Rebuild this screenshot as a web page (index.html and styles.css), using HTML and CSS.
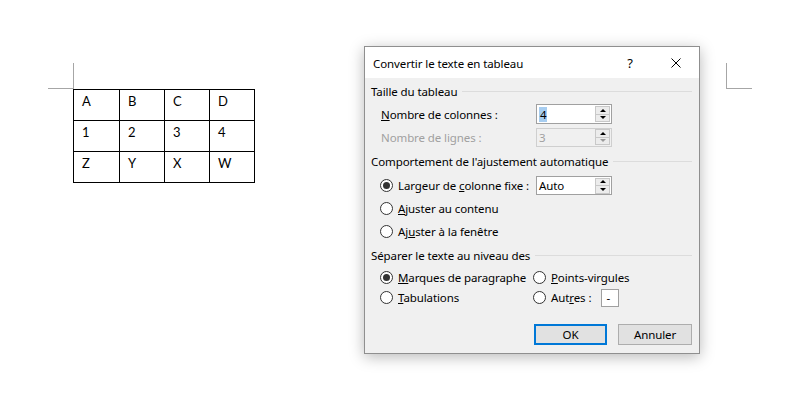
FILE: index.html
```html
<!DOCTYPE html>
<html lang="fr">
<head>
<meta charset="utf-8">
<title>Convertir le texte en tableau</title>
<link rel="stylesheet" href="styles.css">
</head>
<body>
<div class="doc">
  <div class="marks">
    <div class="mark mark-l"></div>
    <div class="mark mark-r"></div>
  </div>
  <table class="grid">
    <colgroup><col class="c1"><col class="c2"><col class="c2"><col class="c2"></colgroup>
    <tr><td>A</td><td>B</td><td>C</td><td>D</td></tr>
    <tr><td>1</td><td>2</td><td>3</td><td>4</td></tr>
    <tr><td>Z</td><td>Y</td><td>X</td><td>W</td></tr>
  </table>
</div>

<div class="dialog">
  <div class="titlebar">
    <span class="title">Convertir le texte en tableau</span>
    <span class="tb-btn help">?</span>
    <span class="tb-btn close">
      <svg width="10" height="10" viewBox="0 0 10 10"><path d="M0.5 0.5 L9.5 9.5 M9.5 0.5 L0.5 9.5" stroke="#000" stroke-width="1" fill="none"/></svg>
    </span>
  </div>
  <div class="body">
    <div class="section h1"><span>Taille du tableau</span><i class="rule"></i></div>
    <div class="row r-col">
      <span class="label"><u>N</u>ombre de colonnes :</span>
      <span class="spin"><span class="val"><span class="sel">4</span></span><span class="arrows"><b class="up"></b><b class="down"></b></span></span>
    </div>
    <div class="row r-lig disabled">
      <span class="label">Nombre de lignes :</span>
      <span class="spin off"><span class="val">3</span><span class="arrows"><b class="up"></b><b class="down"></b></span></span>
    </div>

    <div class="section h2"><span>Comportement de l'ajustement automatique</span><i class="rule"></i></div>
    <div class="row radio-row">
      <span class="opt w156"><span class="radio on"><span class="dot"></span></span><span class="txt">Largeur de <u>c</u>olonne fixe :</span></span>
      <span class="spin auto"><span class="val">Auto</span><span class="arrows"><b class="up"></b><b class="down"></b></span></span>
    </div>
    <div class="row radio-row">
      <span class="opt"><span class="radio"></span><span class="txt"><u>A</u>juster au contenu</span></span>
    </div>
    <div class="row radio-row">
      <span class="opt"><span class="radio"></span><span class="txt">Aj<u>u</u>ster à la fenêtre</span></span>
    </div>

    <div class="section h3"><span>Séparer le texte au niveau des</span><i class="rule"></i></div>
    <div class="row two r-a">
      <span class="opt w153"><span class="radio on"><span class="dot"></span></span><span class="txt"><u>M</u>arques de paragraphe</span></span>
      <span class="opt"><span class="radio"></span><span class="txt"><u>P</u>oints-virgules</span></span>
    </div>
    <div class="row two r-b">
      <span class="opt w153"><span class="radio"></span><span class="txt"><u>T</u>abulations</span></span>
      <span class="opt"><span class="radio"></span><span class="txt">Aut<u>r</u>es :</span></span>
      <span class="small-input">-</span>
    </div>

    <div class="buttons">
      <span class="btn default">OK</span>
      <span class="btn">Annuler</span>
    </div>
  </div>
</div>
</body>
</html>
```

FILE: styles.css
```css
html, body {
  margin: 0;
  padding: 0;
  background: #ffffff;
}
body {
  width: 787px;
  height: 393px;
  overflow: hidden;
  position: relative;
  font-family: "Noto Sans", "DejaVu Sans", sans-serif;
}

/* document page */
.doc {
  padding: 63px 35px 0 48px;
}
.marks {
  display: flex;
  justify-content: space-between;
}
.mark {
  box-sizing: border-box;
  width: 26px;
  height: 26px;
  border-bottom: 1px solid #a6a6a6;
}
.mark-l { border-right: 1px solid #a6a6a6; }
.mark-r { border-left: 1px solid #a6a6a6; }

.grid {
  margin-left: 25px;
  border-collapse: collapse;
  table-layout: fixed;
  width: 182px;
  font-family: Lato, "Noto Sans", sans-serif;
  font-size: 13px;
  color: #000;
}
.grid .c1 { width: 46px; }
.grid .c2 { width: 45px; }
.grid tr { height: 31px; }
.grid td {
  border: 1px solid #000;
  padding: 4px 0 0 8px;
  vertical-align: top;
  line-height: 15px;
}

/* dialog window */
.dialog {
  position: absolute;
  left: 364px;
  top: 46px;
  width: 336px;
  height: 308px;
  box-sizing: border-box;
  border: 1px solid #8f8f8f;
  background: #f0f0f0;
  box-shadow: 0 3px 14px rgba(0, 0, 0, 0.28);
  font-size: 11.5px;
  letter-spacing: -0.1px;
  color: #000;
  display: flex;
  flex-direction: column;
}
.titlebar {
  height: 31px;
  background: #fff;
  display: flex;
  align-items: center;
}
.title {
  flex: 1;
  padding-left: 8px;
  padding-top: 1px;
}
.tb-btn {
  width: 46px;
  height: 31px;
  display: flex;
  align-items: center;
  justify-content: center;
}
.help { font-size: 13px; }

.body {
  padding: 2px 7px 0 6px;
  display: flex;
  flex-direction: column;
}
.section {
  display: flex;
  align-items: center;
}
.section .rule {
  flex: 1;
  height: 1px;
  background: #dcdcdc;
  margin-left: 5px;
}
.h1 { height: 22px; }
.h2 { height: 26px; }
.h3 { height: 24px; }

.row {
  display: flex;
  align-items: center;
}
.r-col { height: 24px; padding-left: 10px; }
.r-lig { height: 22px; padding-left: 10px; }
.label { width: 155px; }
.disabled .label { color: #a0a0a0; }

.radio-row { height: 23px; padding-left: 9px; }
.two { padding-left: 9px; }
.r-a { height: 20px; }
.r-b { height: 21px; }

.opt {
  display: flex;
  align-items: center;
}
.txt { white-space: nowrap; }
.w156 { width: 156px; }
.w153 { width: 153px; }
.radio {
  box-sizing: border-box;
  width: 13px;
  height: 13px;
  border: 1px solid #333;
  border-radius: 50%;
  background: #fff;
  margin-right: 5px;
  display: flex;
  align-items: center;
  justify-content: center;
}
.radio .dot {
  width: 7px;
  height: 7px;
  border-radius: 50%;
  background: #333;
}

/* spin box */
.spin {
  box-sizing: border-box;
  width: 76px;
  height: 20px;
  border: 1px solid #a0a0a0;
  background: #fff;
  display: flex;
  align-items: center;
}
.spin.off {
  height: 19px;
  border-color: #cfcfcf;
  background: #f0f0f0;
  color: #a0a0a0;
}
.spin.auto { height: 19px; }
.spin .val {
  flex: 1;
  padding-left: 2px;
}
.sel {
  background: #a7cdf0;
  padding: 0 1px;
}
.arrows {
  width: 15px;
  height: 16px;
  margin-right: 1px;
  display: flex;
  flex-direction: column;
}
.arrows b {
  flex: 1;
  box-sizing: border-box;
  border: 1px solid #c8c8c8;
  background: #ececec;
  display: flex;
  align-items: center;
  justify-content: center;
}
.arrows b + b { border-top: 0; }
.arrows b::after {
  content: "";
  width: 0;
  height: 0;
  border-left: 3px solid transparent;
  border-right: 3px solid transparent;
}
.arrows .up::after { border-bottom: 3px solid #000; }
.arrows .down::after { border-top: 3px solid #000; }
.off .arrows .down::after { border-top-color: #9a9a9a; }

.small-input {
  box-sizing: border-box;
  width: 18px;
  height: 18px;
  margin-left: 10px;
  background: #fff;
  border: 1px solid #a0a0a0;
  padding-left: 4px;
  line-height: 15px;
}

/* buttons */
.buttons {
  display: flex;
  justify-content: flex-end;
  gap: 11px;
  margin-top: 16px;
}
.btn {
  box-sizing: border-box;
  width: 74px;
  height: 21px;
  background: #e1e1e1;
  border: 1px solid #adadad;
  display: flex;
  align-items: center;
  justify-content: center;
}
.btn.default {
  width: 73px;
  border: 2px solid #0078d7;
}
```
